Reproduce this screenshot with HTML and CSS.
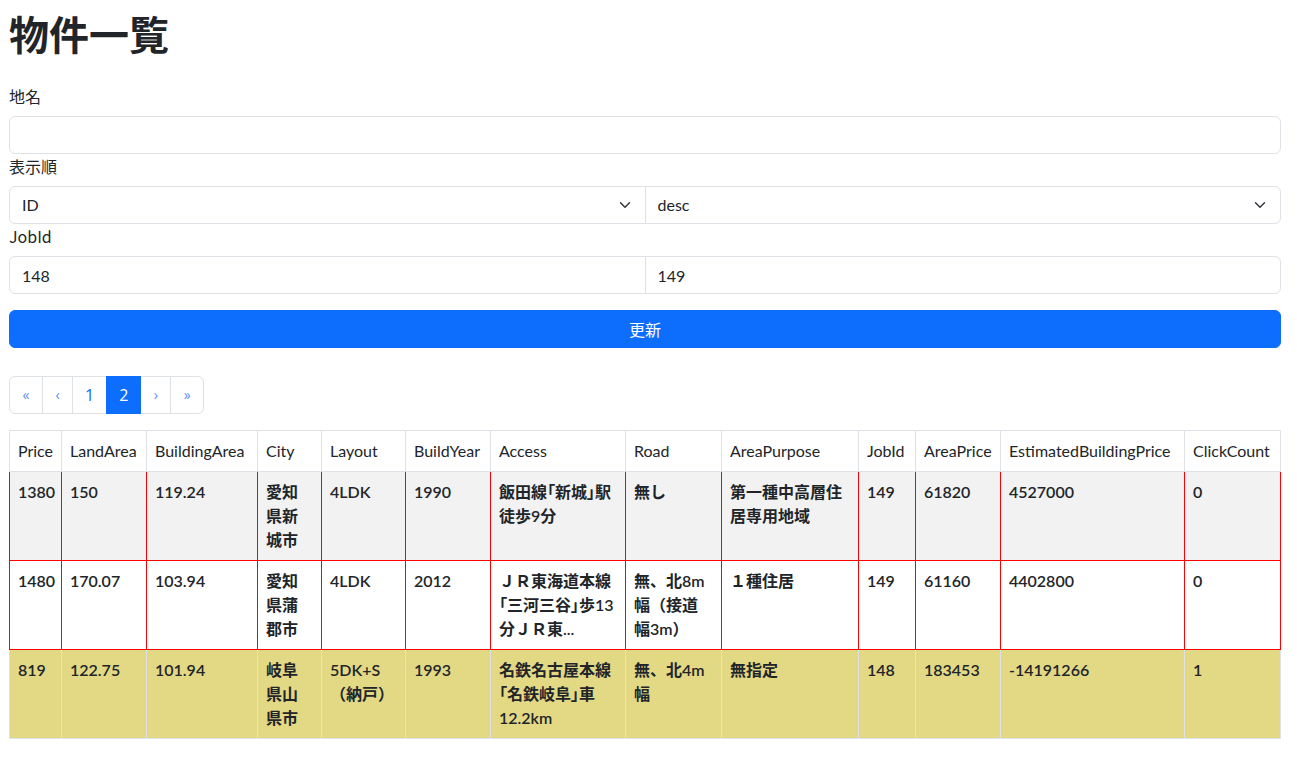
FILE: index.html
```html
<!DOCTYPE html>
<html lang="ja">
<head>
<meta charset="utf-8">
<title>物件一覧</title>
<link rel="stylesheet" href="styles.css">
</head>
<body>
<main class="page">
  <h1 class="title">物件一覧</h1>
  <form class="filters">
    <label class="form-label" for="place">地名</label>
    <input class="form-control" id="place" type="text">
    <label class="form-label">表示順</label>
    <div class="input-group">
      <select class="form-select"><option>ID</option></select>
      <select class="form-select"><option>desc</option></select>
    </div>
    <label class="form-label">JobId</label>
    <div class="input-group">
      <input class="form-control" type="text" value="148">
      <input class="form-control" type="text" value="149">
    </div>
    <button type="button" class="btn-primary">更新</button>
  </form>
  <nav>
    <ul class="pagination">
      <li class="page-item"><a class="page-link arrow" href="#">«</a></li>
      <li class="page-item"><a class="page-link arrow" href="#">‹</a></li>
      <li class="page-item"><a class="page-link" href="#">1</a></li>
      <li class="page-item active"><a class="page-link" href="#">2</a></li>
      <li class="page-item"><a class="page-link arrow" href="#">›</a></li>
      <li class="page-item"><a class="page-link arrow" href="#">»</a></li>
    </ul>
  </nav>
  <table class="data-table">
    <colgroup>
      <col class="w-price"><col class="w-land"><col class="w-building"><col class="w-city">
      <col class="w-layout"><col class="w-year"><col class="w-access"><col class="w-road">
      <col class="w-purpose"><col class="w-job"><col class="w-areaprice"><col class="w-est">
      <col class="w-click">
    </colgroup>
    <thead>
      <tr>
        <th>Price</th><th>LandArea</th><th>BuildingArea</th><th>City</th><th>Layout</th>
        <th>BuildYear</th><th>Access</th><th>Road</th><th>AreaPurpose</th><th>JobId</th>
        <th>AreaPrice</th><th>EstimatedBuildingPrice</th><th>ClickCount</th>
      </tr>
    </thead>
    <tbody>
      <tr class="row-striped row-flagged">
        <td>1380</td><td>150</td><td>119.24</td><td>愛知県新城市</td><td>4LDK</td>
        <td>1990</td><td>飯田線<span class="quote">「新城」</span>駅徒歩9分</td><td>無し</td><td>第一種中高層住居専用地域</td>
        <td>149</td><td>61820</td><td>4527000</td><td>0</td>
      </tr>
      <tr class="row-flagged">
        <td>1480</td><td>170.07</td><td>103.94</td><td>愛知県蒲郡市</td><td>4LDK</td>
        <td>2012</td><td>ＪＲ東海道本線<span class="quote">「三河三谷」</span>歩13分ＪＲ東...</td><td>無、北8m幅（接道幅3m）</td><td>１種住居</td>
        <td>149</td><td>61160</td><td>4402800</td><td>0</td>
      </tr>
      <tr class="row-clicked">
        <td>819</td><td>122.75</td><td>101.94</td><td>岐阜県山県市</td><td>5DK+S（納戸）</td>
        <td>1993</td><td>名鉄名古屋本線<span class="quote">「名鉄岐阜」</span>車12.2km</td><td>無、北4m幅</td><td>無指定</td>
        <td>148</td><td>183453</td><td>-14191266</td><td>1</td>
      </tr>
    </tbody>
  </table>
</main>
</body>
</html>
```

FILE: styles.css
```css
* { box-sizing: border-box; }

html, body {
  margin: 0;
  background: #fff;
}

body {
  font-family: "Lato", "Noto Sans CJK JP", sans-serif;
  font-size: 16px;
  line-height: 24px;
  color: #212529;
}

.page {
  padding: 9px 16px 20px 9px;
}

.title {
  margin: 0 0 27px;
  font-size: 40px;
  line-height: 48px;
  font-weight: 700;
  font-family: "Noto Sans CJK JP", sans-serif;
}

.filters {
  display: flex;
  flex-direction: column;
}

.form-label {
  display: block;
  margin-bottom: 8px;
  font-family: "Noto Sans CJK JP", sans-serif;
}

.form-control,
.form-select {
  display: block;
  width: 100%;
  height: 38px;
  margin: 0;
  padding: 6px 12px;
  font: inherit;
  color: #212529;
  background-color: #fff;
  border: 1px solid #dee2e6;
  border-radius: 6px;
  outline: none;
}

.form-select {
  appearance: none;
  -webkit-appearance: none;
  padding-right: 36px;
  background-image: url("data:image/svg+xml,%3csvg xmlns='http://www.w3.org/2000/svg' viewBox='0 0 16 16'%3e%3cpath fill='none' stroke='%23343a40' stroke-linecap='round' stroke-linejoin='round' stroke-width='2' d='m2 5 6 6 6-6'/%3e%3c/svg%3e");
  background-repeat: no-repeat;
  background-position: right 12px center;
  background-size: 16px 12px;
}

.input-group {
  display: flex;
}

.input-group > * {
  flex: 1 1 0;
  min-width: 0;
}

.input-group > :first-child {
  border-top-right-radius: 0;
  border-bottom-right-radius: 0;
}

.input-group > :last-child {
  margin-left: -1px;
  border-top-left-radius: 0;
  border-bottom-left-radius: 0;
}

.btn-primary {
  margin-top: 16px;
  height: 38px;
  padding: 6px 12px;
  font-family: "Noto Sans CJK JP", sans-serif;
  font-size: 16px;
  line-height: 24px;
  color: #fff;
  background: #0d6efd;
  border: 1px solid #0d6efd;
  border-radius: 6px;
}

.pagination {
  display: flex;
  list-style: none;
  margin: 28px 0 16px;
  padding: 0;
}

.page-item + .page-item { margin-left: -1px; }

.page-link {
  display: block;
  padding: 6px 12px;
  line-height: 24px;
  font-size: 16px;
  color: #0d6efd;
  text-decoration: none;
  background: #fff;
  border: 1px solid #dee2e6;
  font-family: "Open Sans", sans-serif;
}

.page-link.arrow {
  font-size: 14px;
  min-width: 31px;
  text-align: center;
  color: #5c8ef5;
}

.page-item:first-child .page-link,
.page-item:last-child .page-link { min-width: 34px; }

.page-item:first-child .page-link {
  border-top-left-radius: 6px;
  border-bottom-left-radius: 6px;
}

.page-item:last-child .page-link {
  border-top-right-radius: 6px;
  border-bottom-right-radius: 6px;
}

.page-item.active .page-link {
  position: relative;
  z-index: 1;
  color: #fff;
  background: #0d6efd;
  border-color: #0d6efd;
}

.data-table {
  width: 100%;
  border-collapse: collapse;
  table-layout: fixed;
}

.w-price { width: 52px; }
.w-land { width: 85px; }
.w-building { width: 111px; }
.w-city { width: 64px; }
.w-layout { width: 84px; }
.w-year { width: 85px; }
.w-access { width: 135px; }
.w-road { width: 96px; }
.w-purpose { width: 137px; }
.w-job { width: 57px; }
.w-areaprice { width: 85px; }
.w-est { width: 184px; }
.w-click { width: auto; }

.data-table th,
.data-table td {
  padding: 8px;
  border: 1px solid #dee2e6;
  text-align: left;
  vertical-align: top;
  line-height: 24px;
}

.data-table th {
  font-weight: 400;
  white-space: nowrap;
}

.data-table td {
  font-weight: 600;
}

.quote {
  font-feature-settings: "palt";
}

.row-striped td { background: #f2f2f2; }

.row-flagged td { border-color: #ff0000; }

.row-clicked td { background: #e3d985; }
```
